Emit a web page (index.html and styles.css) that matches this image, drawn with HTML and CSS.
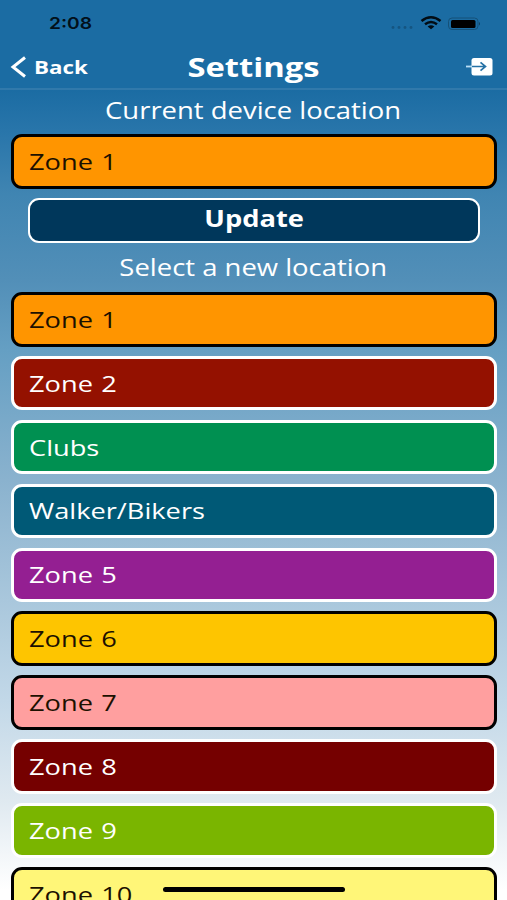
FILE: index.html
```html
<!DOCTYPE html>
<html lang="en">
<head>
<meta charset="utf-8">
<title>Settings</title>
<link rel="stylesheet" href="styles.css">
</head>
<body>
<div class="screen">
  <div class="status">
    <span class="time">2:08</span>
    <svg class="indicators" width="92" height="16" viewBox="0 0 92 16">
      <g fill="#155581"><circle cx="4" cy="12.500" r="1.400"/><circle cx="10" cy="12.500" r="1.400"/><circle cx="16" cy="12.500" r="1.400"/><circle cx="22" cy="12.500" r="1.400"/></g>
      <g fill="none" stroke="#020c14" stroke-width="2.500"><path d="M32.500 6Q42 -1.500 51.500 6"/><path d="M36 9.300Q42 4.800 48 9.300"/></g>
      <path d="M38.600 11.400Q42 9 45.400 11.400L42 14.300Z" fill="#020c14"/>
      <rect x="59.500" y="3" width="29.500" height="11.500" rx="3.500" fill="none" stroke="#155178"/>
      <rect x="62" y="5" width="24.500" height="8" rx="1.500" fill="#000"/>
      <path d="M90 7Q92 8.700 90 10.600Z" fill="#0f4060"/>
    </svg>
  </div>
  <header class="nav">
    <a class="back"><svg width="16" height="22" viewBox="0 0 16 22"><path d="M15 1.500L3 11L15 20.500" fill="none" stroke="#fff" stroke-width="3"/></svg><span class="wide">Back</span></a>
    <h1><span class="wide">Settings</span></h1>
    <svg class="exit" width="28" height="20" viewBox="0 0 28 20"><rect x="6.500" y="1" width="21" height="17.500" rx="2.500" fill="#fff"/><path d="M1 9.500H7" stroke="#b9def5" stroke-width="1.800"/><path d="M7 9.500H20M15.500 5.300L20.500 9.500L15.500 13.700" fill="none" stroke="#2672a6" stroke-width="1.700"/></svg>
  </header>
  <h2 class="current"><span class="wide">Current device location</span></h2>
  <div class="zone orange dark"><span class="wide">Zone 1</span></div>
  <button class="update"><span class="wide">Update</span></button>
  <h2 class="select"><span class="wide">Select a new location</span></h2>
  <div class="list">
    <div class="zone orange dark"><span class="wide">Zone 1</span></div>
    <div class="zone red"><span class="wide">Zone 2</span></div>
    <div class="zone green"><span class="wide">Clubs</span></div>
    <div class="zone teal"><span class="wide">Walker/Bikers</span></div>
    <div class="zone purple"><span class="wide">Zone 5</span></div>
    <div class="zone yellow dark"><span class="wide">Zone 6</span></div>
    <div class="zone pink dark"><span class="wide">Zone 7</span></div>
    <div class="zone maroon"><span class="wide">Zone 8</span></div>
    <div class="zone lime"><span class="wide">Zone 9</span></div>
    <div class="zone lemon dark"><span class="wide">Zone 10</span></div>
  </div>
  <div class="home"></div>
</div>
</body>
</html>
```
FILE: styles.css
```css
* { box-sizing: border-box; }
body { margin: 0; overflow: hidden; }
.screen {
  position: relative;
  width: 507px;
  height: 900px;
  overflow: hidden;
  font-family: "Open Sans", sans-serif;
  color: #fff;
  background: linear-gradient(#1b6ca3 0, #1b6ca3 90px, #2875aa 130px, #4085b2 195px, #528fb8 280px, #659fc3 350px, #8ab2ce 480px, #a9c7dc 600px, #c2d8e8 700px, #dfe9f0 800px, #fff 890px);
}
.wide { display: inline-block; transform: scaleX(1.213); white-space: nowrap; }
.status {
  display: flex;
  justify-content: space-between;
  align-items: center;
  height: 46px;
  padding: 0 26px 0 49px;
}
.time {
  font: 600 16px/20px Inter, sans-serif;
  color: #02101a;
  transform: scaleX(1.2);
  transform-origin: left;
}
.nav {
  display: grid;
  grid-template-columns: 1fr auto 1fr;
  align-items: center;
  height: 44px;
  padding: 0 14px 0 10px;
  border-bottom: 2px solid #3179ab;
}
.back { display: flex; align-items: center; gap: 8px; font-size: 18px; font-weight: 700; }
.back .wide, .zone .wide { transform-origin: left; }
.back .wide { transform: scaleX(1.24); }
h1 { margin: 0; padding-left: 4px; font-size: 27px; line-height: 40px; font-weight: 700; }
.exit { justify-self: end; }
h2 { margin: 0; font-size: 23px; line-height: 44px; height: 44px; font-weight: 400; text-align: center; }
h2 .wide { transform: scaleX(1.193); }
.current { line-height: 40px; }
.zone {
  display: flex;
  align-items: center;
  height: 54.500px;
  margin: 0 10px 0 11px;
  padding-left: 15px;
  border: 3px solid #fff;
  border-radius: 11px;
  font-size: 22.700px;
}
.zone .wide { transform: scaleX(1.2); word-spacing: 1px; }
.update {
  display: flex;
  justify-content: center;
  align-items: center;
  width: 452px;
  height: 45px;
  margin: 9px 0 0 28px;
  padding: 0 0 3px;
  border: 2.500px solid #fff;
  border-radius: 11px;
  background: #00375b;
  color: #fff;
  font: 700 22.500px "Open Sans", sans-serif;
}
.select { height: 49.500px; line-height: 49px; }
.list { display: flex; flex-direction: column; gap: 9.400px; }
.dark { border-color: #000; color: #1c1000; }
.orange { background: #ff9500; }
.red { background: #941100; }
.green { background: #009051; }
.teal { background: #005976; }
.purple { background: #941f92; }
.yellow { background: #fec500; }
.pink { background: #ff9f9f; }
.maroon { background: #750000; }
.lime { background: #7ab500; }
.lemon { background: #fff678; }
.home {
  position: absolute;
  left: 163px;
  top: 887px;
  width: 182px;
  height: 5px;
  border-radius: 3px;
  background: #000;
}
```
